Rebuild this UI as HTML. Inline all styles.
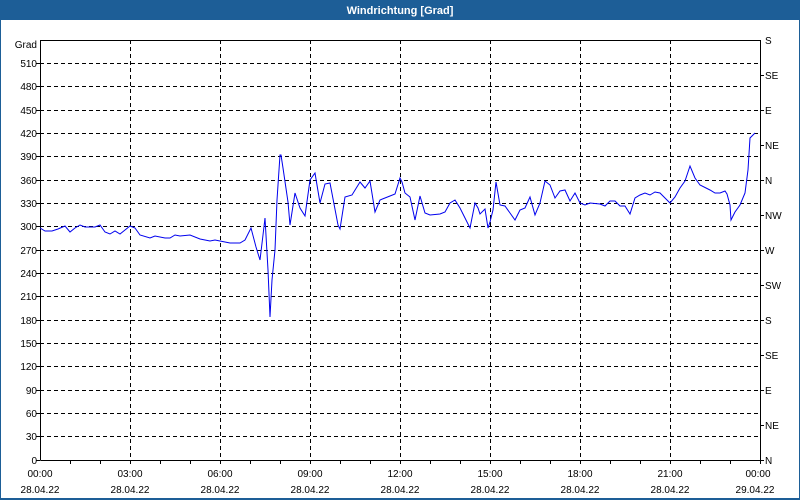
<!DOCTYPE html>
<html><head><meta charset="utf-8"><style>
html,body{margin:0;padding:0;width:800px;height:500px;overflow:hidden;background:#fff}
</style></head><body>
<svg width="800" height="500" xmlns="http://www.w3.org/2000/svg" font-family="Liberation Sans, sans-serif" font-size="10">
<rect x="0" y="0" width="800" height="500" fill="#1d5e97"/>
<rect x="1" y="20" width="798" height="478" fill="#fff"/>
<text x="400" y="14" fill="#fff" font-weight="bold" font-size="11" text-anchor="middle">Windrichtung [Grad]</text>
<g stroke="#000" stroke-width="1" stroke-dasharray="4,3" shape-rendering="crispEdges">
<line x1="40" x2="760" y1="63.5" y2="63.5"/><line x1="40" x2="760" y1="86.5" y2="86.5"/><line x1="40" x2="760" y1="110.5" y2="110.5"/><line x1="40" x2="760" y1="133.5" y2="133.5"/><line x1="40" x2="760" y1="156.5" y2="156.5"/><line x1="40" x2="760" y1="180.5" y2="180.5"/><line x1="40" x2="760" y1="203.5" y2="203.5"/><line x1="40" x2="760" y1="226.5" y2="226.5"/><line x1="40" x2="760" y1="250.5" y2="250.5"/><line x1="40" x2="760" y1="273.5" y2="273.5"/><line x1="40" x2="760" y1="296.5" y2="296.5"/><line x1="40" x2="760" y1="320.5" y2="320.5"/><line x1="40" x2="760" y1="343.5" y2="343.5"/><line x1="40" x2="760" y1="366.5" y2="366.5"/><line x1="40" x2="760" y1="390.5" y2="390.5"/><line x1="40" x2="760" y1="413.5" y2="413.5"/><line x1="40" x2="760" y1="436.5" y2="436.5"/>
<line y1="40" y2="460" x1="130.5" x2="130.5"/><line y1="40" y2="460" x1="220.5" x2="220.5"/><line y1="40" y2="460" x1="310.5" x2="310.5"/><line y1="40" y2="460" x1="400.5" x2="400.5"/><line y1="40" y2="460" x1="490.5" x2="490.5"/><line y1="40" y2="460" x1="580.5" x2="580.5"/><line y1="40" y2="460" x1="670.5" x2="670.5"/>
</g>
<g stroke="#000" stroke-width="1" shape-rendering="crispEdges" fill="none">
<polyline points="40.5,460.5 40.5,40.5 760.5,40.5 760.5,460.5 40.5,460.5"/>
<path d="M36,63.5h4M36,86.5h4M36,110.5h4M36,133.5h4M36,156.5h4M36,180.5h4M36,203.5h4M36,226.5h4M36,250.5h4M36,273.5h4M36,296.5h4M36,320.5h4M36,343.5h4M36,366.5h4M36,390.5h4M36,413.5h4M36,436.5h4M36,460.5h4"/>
<path d="M760,75.5h4M760,110.5h4M760,145.5h4M760,180.5h4M760,215.5h4M760,250.5h4M760,285.5h4M760,320.5h4M760,355.5h4M760,390.5h4M760,425.5h4M760,460.5h4"/>
<path d="M70.5,460v4M100.5,460v4M130.5,460v4M160.5,460v4M190.5,460v4M220.5,460v4M250.5,460v4M280.5,460v4M310.5,460v4M340.5,460v4M370.5,460v4M400.5,460v4M430.5,460v4M460.5,460v4M490.5,460v4M520.5,460v4M550.5,460v4M580.5,460v4M610.5,460v4M640.5,460v4M670.5,460v4M700.5,460v4M730.5,460v4M760.5,460v4"/>
</g>
<g fill="#000" text-anchor="end">
<text x="37" y="48">Grad</text><text x="37" y="67">510</text><text x="37" y="90">480</text><text x="37" y="114">450</text><text x="37" y="137">420</text><text x="37" y="160">390</text><text x="37" y="184">360</text><text x="37" y="207">330</text><text x="37" y="230">300</text><text x="37" y="254">270</text><text x="37" y="277">240</text><text x="37" y="300">210</text><text x="37" y="324">180</text><text x="37" y="347">150</text><text x="37" y="370">120</text><text x="37" y="394">90</text><text x="37" y="417">60</text><text x="37" y="440">30</text><text x="37" y="464">0</text>
</g>
<g fill="#000">
<text x="765" y="44">S</text><text x="765" y="79">SE</text><text x="765" y="114">E</text><text x="765" y="149">NE</text><text x="765" y="184">N</text><text x="765" y="219">NW</text><text x="765" y="254">W</text><text x="765" y="289">SW</text><text x="765" y="324">S</text><text x="765" y="359">SE</text><text x="765" y="394">E</text><text x="765" y="429">NE</text><text x="765" y="464">N</text>
</g>
<g fill="#000" text-anchor="middle">
<text x="40" y="477">00:00</text><text x="130" y="477">03:00</text><text x="220" y="477">06:00</text><text x="310" y="477">09:00</text><text x="400" y="477">12:00</text><text x="490" y="477">15:00</text><text x="580" y="477">18:00</text><text x="670" y="477">21:00</text><text x="758" y="477">00:00</text>
<text x="40" y="493">28.04.22</text><text x="130" y="493">28.04.22</text><text x="220" y="493">28.04.22</text><text x="310" y="493">28.04.22</text><text x="400" y="493">28.04.22</text><text x="490" y="493">28.04.22</text><text x="580" y="493">28.04.22</text><text x="670" y="493">28.04.22</text><text x="755" y="493">29.04.22</text>
</g>
<polyline fill="none" stroke="#0000ee" stroke-width="1" points="40,228 45,231 52,231 58,229 65,226 70,232 75,228 80,225 85,227 95,227 100,225 105,232 110,234 115,231 120,234 125,230 130,226 135,228 140,235 150,238 155,236 165,238 170,238 175,235 180,236 190,235 200,239 210,241 215,240 220,241 230,243 240,243 245,240 251,228 256,247 260,260 263,235 265,218 268,270 270,317 272,280 275,250 277,200 280,155 281,155 283,168 288,202 290,225 295,193 300,208 305,216 310,180 315,173 320,203 325,184 330,183 338,225 340,229 345,197 352,195 360,182 365,188 370,181 375,212 380,200 390,196 395,194 400,178 402,182 405,193 410,197 415,220 420,196 425,213 430,215 440,214 445,212 450,203 455,200 460,208 465,218 470,228 475,203 478,208 480,214 485,209 488,228 490,222 493,210 496,182 500,205 505,206 510,213 515,220 520,210 525,208 530,197 535,215 540,203 545,181 550,185 555,198 560,191 565,190 570,201 575,193 580,203 585,205 590,203 600,204 605,206 610,201 615,201 620,206 625,206 630,214 635,198 640,195 645,193 650,195 655,192 660,193 665,198 670,203 675,197 680,188 685,181 690,166 695,178 700,185 710,190 715,193 720,193 725,191 727,194 730,205 731,220 735,212 740,205 745,193 748,170 750,138 755,133"/>
</svg>
</body></html>
